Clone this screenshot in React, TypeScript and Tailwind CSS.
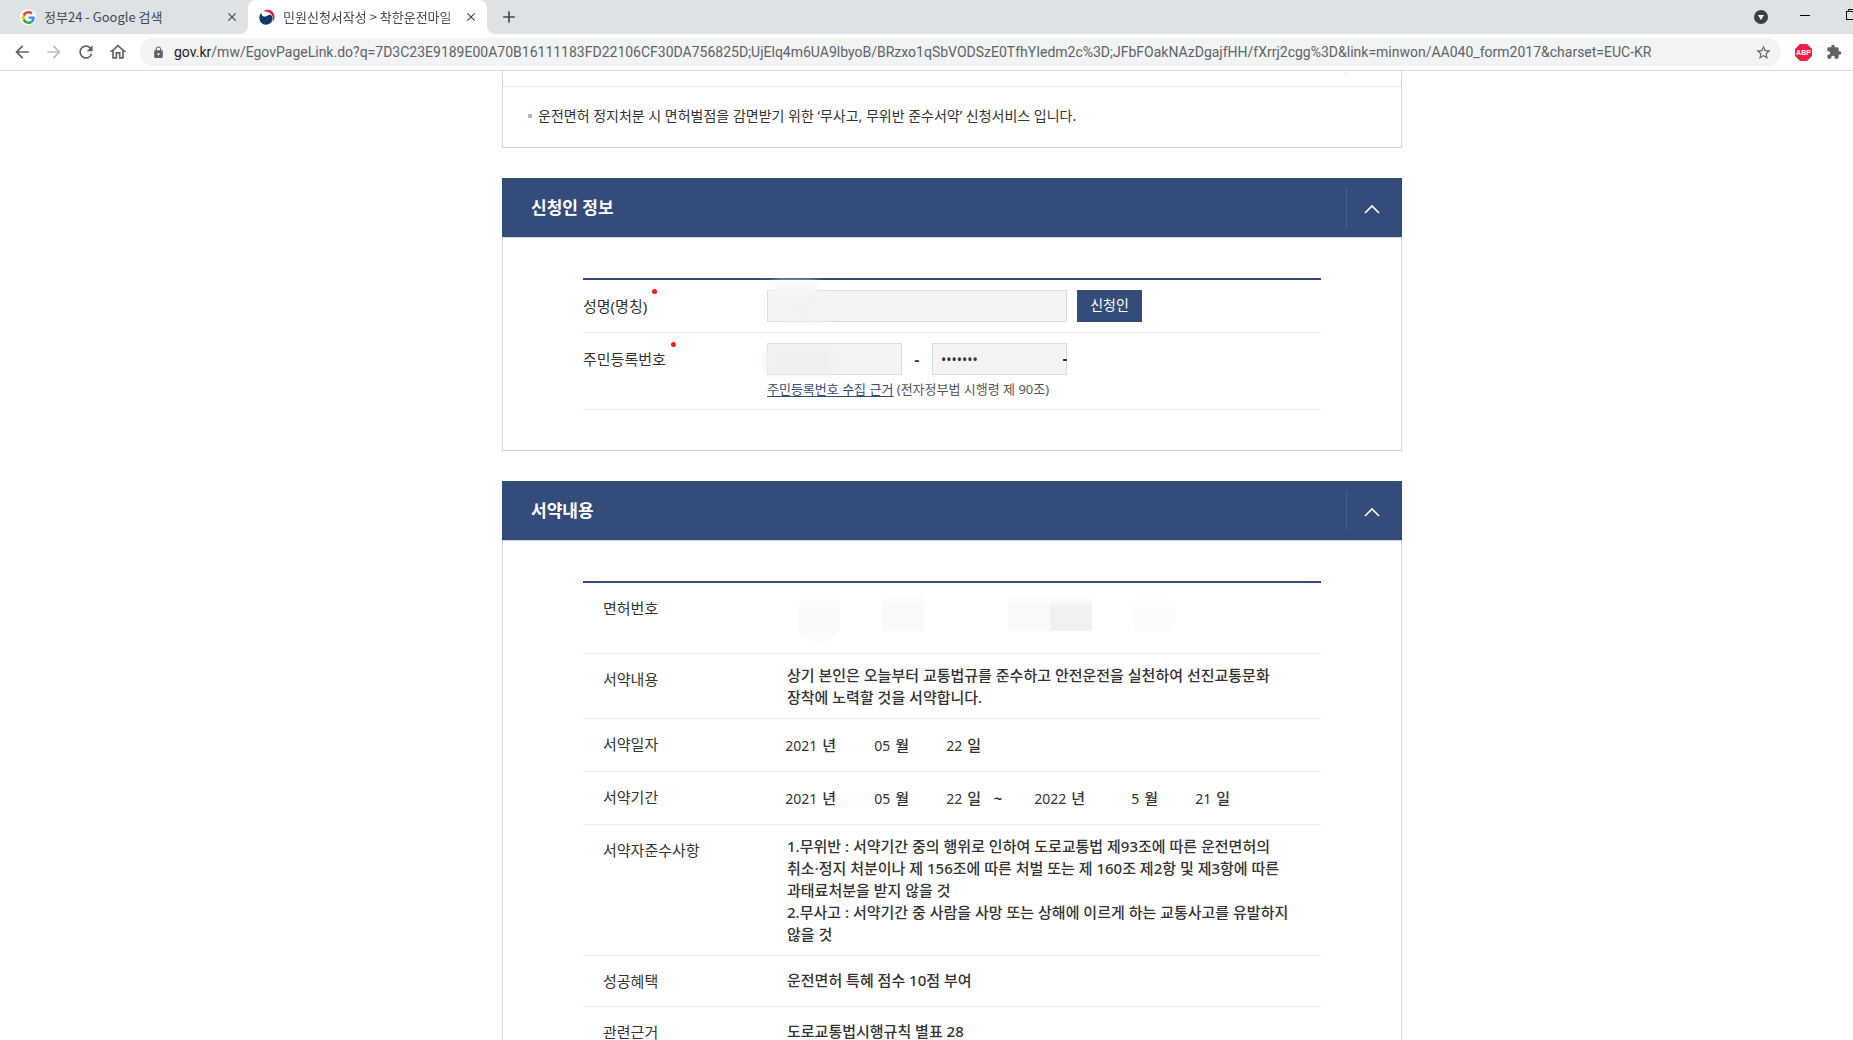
import { useState, type ReactNode } from 'react'
import { MdArrowBack, MdArrowForward, MdRefresh, MdLock, MdStarBorder, MdExtension, MdClose, MdAdd, MdOutlineHome } from 'react-icons/md'

function GoogleIcon() {
  return (
    <svg width="13" height="13" viewBox="0 0 48 48" aria-hidden="true">
      <path fill="#EA4335" d="M24 9.5c3.54 0 6.71 1.22 9.21 3.6l6.85-6.85C35.9 2.38 30.47 0 24 0 14.62 0 6.51 5.38 2.56 13.22l7.98 6.19C12.43 13.72 17.74 9.5 24 9.5z" />
      <path fill="#4285F4" d="M46.98 24.55c0-1.57-.15-3.09-.38-4.55H24v9.02h12.94c-.58 2.96-2.26 5.48-4.78 7.18l7.73 6c4.51-4.18 7.09-10.36 7.09-17.65z" />
      <path fill="#FBBC05" d="M10.53 28.59c-.48-1.45-.76-2.99-.76-4.59s.27-3.14.76-4.59l-7.98-6.19C.92 16.46 0 20.12 0 24c0 3.88.92 7.54 2.56 10.78l7.97-6.19z" />
      <path fill="#34A853" d="M24 48c6.48 0 11.93-2.13 15.89-5.81l-7.73-6c-2.15 1.45-4.92 2.3-8.16 2.3-6.26 0-11.57-4.22-13.47-9.91l-7.98 6.19C6.51 42.62 14.62 48 24 48z" />
    </svg>
  )
}

function GovIcon() {
  return (
    <svg width="16" height="16" viewBox="0 0 32 32" aria-hidden="true">
      <path fill="#e4183c" d="M8 5C15-1 26 1 30 10c2 6 1 12-3 16 2-7 1-13-4-17C18 5 13 4 8 5z" />
      <path fill="#0d3768" d="M5 7c-1 5 2 8 7 8 5-1 8-5 12-3 4 3 4 10 1 14-6 7-16 7-21 1C-1 21 0 12 5 7z" />
      <path fill="#fff" d="M8 8c4-2 9-2 13 1-3 1-4 4-6 5-4 2-8-1-7-6z" />
    </svg>
  )
}

function BrowserChrome() {
  return (
    <header>
      <div className="flex h-[34px] overflow-hidden bg-[#dee1e6] font-[Noto_Sans_CJK_KR,sans-serif] text-[13px] text-[#45494d]">
        <div className="flex w-[248px] shrink-0 items-center pl-5">
          <span className="flex size-4 items-center justify-center rounded-full bg-white"><GoogleIcon /></span>
          <span className="ml-2 flex-1 truncate">정부24 - Google 검색</span>
          <button aria-label="탭 닫기" className="mr-[9px]"><MdClose size={14} /></button>
        </div>
        <div className="relative flex w-[239px] shrink-0 items-center rounded-t-lg bg-white pl-[11px]">
          <svg width="8" height="8" viewBox="0 0 8 8" className="absolute -left-2 bottom-0" fill="#fff"><path d="M8 0v8H0a8 8 0 0 0 8-8z" /></svg>
          <svg width="8" height="8" viewBox="0 0 8 8" className="absolute -right-2 bottom-0" fill="#fff"><path d="M0 0v8h8a8 8 0 0 1-8-8z" /></svg>
          <GovIcon />
          <span className="ml-2 flex-1 whitespace-nowrap mask-r-from-90%">민원신청서작성 &gt; 착한운전마일</span>
          <button aria-label="탭 닫기" className="mr-[9px]"><MdClose size={14} /></button>
        </div>
        <button aria-label="새 탭" className="ml-3"><MdAdd size={20} /></button>
        <div className="ml-auto flex items-center">
          <button aria-label="탭 검색" className="mr-8 flex size-[14px] items-center justify-center rounded-full bg-[#3c4043]">
            <svg width="6" height="5" viewBox="0 0 6 5"><path d="M0 0h6L3 5z" fill="#fff" /></svg>
          </button>
          <button aria-label="최소화" className="mr-9">
            <svg width="10" height="11" viewBox="0 0 10 11"><path d="M0 3.500h10" stroke="#000" /></svg>
          </button>
          <button aria-label="이전 크기로 복원" className="w-[7px] overflow-hidden pb-[6px]">
            <svg width="11" height="11" viewBox="0 0 11 11" fill="none" stroke="#000"><path d="M.5 2.500h8v8h-8zM2.500 2.500v-2h8v8h-2" /></svg>
          </button>
        </div>
      </div>
      <div className="flex h-[37px] items-center border-b border-[#dadada] bg-white pl-3 text-[#5f6368]">
        <button aria-label="뒤로" className="mr-3"><MdArrowBack size={20} /></button>
        <button aria-label="앞으로" className="mr-3 text-[#babcbe]"><MdArrowForward size={20} /></button>
        <button aria-label="새로고침" className="mr-3"><MdRefresh size={20} /></button>
        <button aria-label="홈" className="mr-3"><MdOutlineHome size={20} /></button>
        <div className="flex h-7 flex-1 items-center rounded-full bg-[#f1f3f4] pl-3 pr-[9px] font-[Roboto,sans-serif] text-[14px]">
          <MdLock size={13} className="mr-[9px] shrink-0" />
          <span className="flex-1 overflow-hidden whitespace-nowrap">
            <span className="text-[#202124]">gov.kr</span>/mw/EgovPageLink.do?q=7D3C23E9189E00A70B16111183FD22106CF30DA756825D;UjElq4m6UA9lbyoB/BRzxo1qSbVODSzE0TfhYIedm2c%3D;JFbFOakNAzDgajfHH/fXrrj2cgg%3D&amp;link=minwon/AA040_form2017&amp;charset=EUC-KR
          </span>
          <button aria-label="북마크"><MdStarBorder size={17} /></button>
        </div>
        <button aria-label="Adblock Plus" className="mx-[14px]">
          <svg width="17" height="17" viewBox="0 0 17 17">
            <path d="M5 0h7l5 5v7l-5 5H5l-5-5V5z" fill="#ed1e45" />
            <text x="8.500" y="11" textAnchor="middle" fontSize="7" fontWeight="700" fontFamily="Liberation Sans" fill="#fff">ABP</text>
          </svg>
        </button>
        <button aria-label="확장 프로그램" className="mr-[11px]"><MdExtension size={16} /></button>
      </div>
    </header>
  )
}

function Panel({ title, children }: { title: string; children: ReactNode }) {
  const [open, setOpen] = useState(true)

  return (
    <section className="mt-[30px]">
      <div className="flex h-[59px] items-center bg-[#344c79] pl-[29px] text-white">
        <h2 className="flex-1 text-[17px] font-bold">{title}</h2>
        <button
          aria-label={open ? '접기' : '펼치기'}
          aria-expanded={open}
          onClick={() => setOpen(!open)}
          className="flex h-10 w-14 items-center justify-center border-l border-[#48608a] pr-[5px] pt-[2px]"
        >
          <svg width="16" height="10" viewBox="0 0 16 10" fill="none" stroke="#fff" strokeWidth="1.600" className={open ? '' : 'rotate-180'}>
            <path d="M1 9l7-7 7 7" />
          </svg>
        </button>
      </div>
      {open && <div className="border border-[#d3d3d3] px-20 py-10">{children}</div>}
    </section>
  )
}

const readOnlyBox = 'h-8 border border-[#dcdcdc] bg-[#f4f4f4] px-2 text-[14px] outline-none'

function RequiredDot() {
  return <i className="mb-[30px] ml-[5px] size-[5px] rounded-full bg-[#f71b1b]" />
}

function Applicant() {
  return (
    <div className="border-t-2 border-[#344c79]">
      <div className="flex h-[53px] items-center border-b border-[#ececec]">
        <label htmlFor="name" className="flex w-[184px] items-center">
          성명(명칭)<RequiredDot />
        </label>
        <div className="relative">
          <input id="name" readOnly className={`w-[300px] ${readOnlyBox}`} />
          <span className="absolute -top-2 left-1 h-4 w-12 rounded-full bg-[#f5f7f9] blur-xs" />
          <span className="absolute left-2 top-2 h-6 w-14 rounded-full bg-[#f1f2f2] blur-xs" />
        </div>
        <button className="ml-[10px] h-8 w-[65px] bg-[#344c79] pb-1 text-[14px] text-white">신청인</button>
      </div>
      <div className="flex h-[77px] border-b border-[#ececec] pt-[10px]">
        <label htmlFor="rrn1" className="flex h-8 w-[184px] items-center">
          주민등록번호<RequiredDot />
        </label>
        <div>
          <div className="flex items-center">
            <div className="relative">
              <input id="rrn1" readOnly className={`w-[135px] ${readOnlyBox}`} />
              <span className="absolute -left-1 top-1 h-7 w-18 rounded-full bg-[#f0f0f0] blur-xs" />
            </div>
            <span className="w-[30px] text-center font-bold">-</span>
            <input aria-label="주민등록번호 뒷자리" type="password" readOnly defaultValue="0000000" className={`w-[135px] ${readOnlyBox}`} />
            <span className="-ml-1 mt-[2px] h-[2px] w-1 bg-[#333]" />
          </div>
          <p className="mt-1 text-[13px] leading-5 text-[#555]">
            <a href="#" className="text-[#344c79] underline underline-offset-2">주민등록번호 수집 근거</a> (전자정부법 시행령 제 90조)
          </p>
        </div>
      </div>
    </div>
  )
}

function Row({ label, children, className }: { label: string; children: ReactNode; className: string }) {
  return (
    <tr className={`border-b border-[#ececec] align-top ${className}`}>
      <th scope="row" className="w-[204px] pl-5 pt-[14px] text-left font-normal leading-[22px]">{label}</th>
      <td className="pt-[10px] font-medium leading-[22px]">{children}</td>
    </tr>
  )
}

function Part({ value, unit, className }: { value: string; unit: string; className: string }) {
  return (
    <span className={`flex items-baseline justify-end gap-[5px] ${className}`}>
      <span className="text-[14px] font-normal">{value}</span>
      {unit}
    </span>
  )
}

function Pledge() {
  return (
    <table className="w-full border-collapse border-t-2 border-[#344c79]">
      <tbody>
        <Row label="면허번호" className="h-[71px]">
          {/* 가려진 면허번호 */}
          <div className="ml-[11px] flex h-[50px] w-[378px]">
            <span className="h-[50px] w-[42px] rounded-2xl bg-linear-to-b from-white via-[#f8f8f8] to-[#fdfdfd]" />
            <span className="w-[42px]" />
            <span className="h-[38px] w-[42px] bg-linear-to-b from-white to-[#f9f9f9] to-40%" />
            <span className="w-[84px]" />
            <span className="h-[38px] w-[42px] bg-linear-to-b from-white to-[#f9f9f9] to-40%" />
            <span className="h-[38px] w-[42px] bg-linear-to-b from-white from-10% to-[#f1f1f1] to-40%" />
            <span className="w-[42px]" />
            <span className="h-[38px] w-[42px] rounded-r-2xl bg-linear-to-b from-white to-[#fcfcfc] to-40%" />
          </div>
        </Row>
        <Row label="서약내용" className="h-[65px]">
          상기 본인은 오늘부터 교통법규를 준수하고 안전운전을 실천하여 선진교통문화<br />
          장착에 노력할 것을 서약합니다.
        </Row>
        <Row label="서약일자" className="h-[53px]">
          <div className="flex pt-[5px]">
            <Part value="2021" unit="년" className="w-[49px]" />
            <Part value="05" unit="월" className="w-[73px]" />
            <Part value="22" unit="일" className="w-[72px]" />
          </div>
        </Row>
        <Row label="서약기간" className="h-[53px]">
          <div className="flex pt-[5px]">
            <Part value="2021" unit="년" className="w-[49px]" />
            <Part value="05" unit="월" className="w-[73px]" />
            <Part value="22" unit="일" className="w-[72px]" />
            <span className="w-[34px] text-center font-bold">~</span>
            <Part value="2022" unit="년" className="w-[70px]" />
            <Part value="5" unit="월" className="w-[73px]" />
            <Part value="21" unit="일" className="w-[72px]" />
          </div>
        </Row>
        <Row label="서약자준수사항" className="h-[131px]">
          1.무위반 : 서약기간 중의 행위로 인하여 도로교통법 제93조에 따른 운전면허의<br />
          취소·정지 처분이나 제 156조에 따른 처벌 또는 제 160조 제2항 및 제3항에 따른<br />
          과태료처분을 받지 않을 것<br />
          2.무사고 : 서약기간 중 사람을 사망 또는 상해에 이르게 하는 교통사고를 유발하지<br />
          않을 것
        </Row>
        <Row label="성공혜택" className="h-[51px]"><p className="pt-[3px]">운전면허 특혜 점수 10점 부여</p></Row>
        <Row label="관련근거" className="h-[51px]"><p className="pt-[3px]">도로교통법시행규칙 별표 28</p></Row>
      </tbody>
    </table>
  )
}

export default function App() {
  return (
    <div className="flex h-screen flex-col overflow-hidden bg-white">
      <BrowserChrome />
      <main className="min-h-0 flex-1 overflow-hidden pl-[51px] font-[Noto_Sans,Noto_Sans_CJK_KR,sans-serif] text-[15px] text-[#333]">
        <div className="mx-auto max-w-[900px]">
          <section className="border-x border-b border-[#d3d3d3]">
            <div className="flex h-4 justify-end border-b border-[#ececec] pr-[55px]">
              <span className="h-[5px] w-px bg-[#ececec]" />
            </div>
            <p className="flex h-[60px] items-center pb-[3px] pl-[25px] text-[14px]">
              <i className="mr-[6px] size-1 bg-[#bbb]" />
              운전면허 정지처분 시 면허벌점을 감면받기 위한 ‘무사고, 무위반 준수서약’ 신청서비스 입니다.
            </p>
          </section>
          <Panel title="신청인 정보"><Applicant /></Panel>
          <Panel title="서약내용"><Pledge /></Panel>
        </div>
      </main>
    </div>
  )
}
